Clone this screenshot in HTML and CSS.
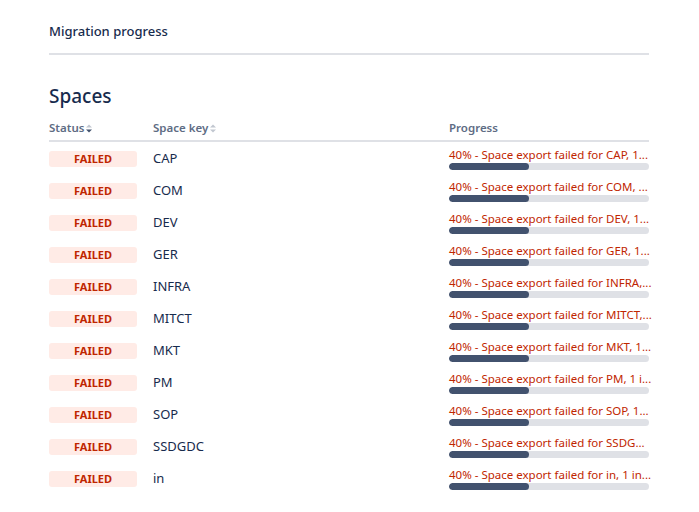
FILE: index.html
```html
<!DOCTYPE html>
<html>
<head>
<meta charset="utf-8">
<link rel="stylesheet" href="styles.css">
</head>
<body>
<div class="page">
  <div class="title">Migration progress</div>
  <h2 class="heading">Spaces</h2>
  <table class="table">
    <thead>
      <tr>
        <th class="c-status">Status<span class="sort"><svg width="6" height="9" viewBox="0 0 6 9"><path d="M0 3.5 L3 0.5 L6 3.5Z" fill="#c1c7d0"/><path d="M0 5.5 L3 8.5 L6 5.5Z" fill="#42526e"/></svg></span></th>
        <th class="c-key">Space key<span class="sort"><svg width="6" height="9" viewBox="0 0 6 9"><path d="M0 3.5 L3 0.5 L6 3.5Z" fill="#c1c7d0"/><path d="M0 5.5 L3 8.5 L6 5.5Z" fill="#c1c7d0"/></svg></span></th>
        <th class="c-gap"></th>
        <th class="c-prog">Progress</th>
      </tr>
    </thead>
    <tbody>
      <tr><td><span class="loz">FAILED</span></td><td class="key">CAP</td><td></td><td><div class="ptext">40% - Space export failed for CAP, 1...</div><div class="bar"><div class="fill" style="width:40%"></div></div></td></tr>
      <tr><td><span class="loz">FAILED</span></td><td class="key">COM</td><td></td><td><div class="ptext">40% - Space export failed for COM, ...</div><div class="bar"><div class="fill" style="width:40%"></div></div></td></tr>
      <tr><td><span class="loz">FAILED</span></td><td class="key">DEV</td><td></td><td><div class="ptext">40% - Space export failed for DEV, 1...</div><div class="bar"><div class="fill" style="width:40%"></div></div></td></tr>
      <tr><td><span class="loz">FAILED</span></td><td class="key">GER</td><td></td><td><div class="ptext">40% - Space export failed for GER, 1...</div><div class="bar"><div class="fill" style="width:40%"></div></div></td></tr>
      <tr><td><span class="loz">FAILED</span></td><td class="key">INFRA</td><td></td><td><div class="ptext">40% - Space export failed for INFRA,...</div><div class="bar"><div class="fill" style="width:40%"></div></div></td></tr>
      <tr><td><span class="loz">FAILED</span></td><td class="key">MITCT</td><td></td><td><div class="ptext">40% - Space export failed for MITCT,...</div><div class="bar"><div class="fill" style="width:40%"></div></div></td></tr>
      <tr><td><span class="loz">FAILED</span></td><td class="key">MKT</td><td></td><td><div class="ptext">40% - Space export failed for MKT, 1...</div><div class="bar"><div class="fill" style="width:40%"></div></div></td></tr>
      <tr><td><span class="loz">FAILED</span></td><td class="key">PM</td><td></td><td><div class="ptext">40% - Space export failed for PM, 1 i...</div><div class="bar"><div class="fill" style="width:40%"></div></div></td></tr>
      <tr><td><span class="loz">FAILED</span></td><td class="key">SOP</td><td></td><td><div class="ptext">40% - Space export failed for SOP, 1...</div><div class="bar"><div class="fill" style="width:40%"></div></div></td></tr>
      <tr><td><span class="loz">FAILED</span></td><td class="key">SSDGDC</td><td></td><td><div class="ptext">40% - Space export failed for SSDG...</div><div class="bar"><div class="fill" style="width:40%"></div></div></td></tr>
      <tr><td><span class="loz">FAILED</span></td><td class="key">in</td><td></td><td><div class="ptext">40% - Space export failed for in, 1 in...</div><div class="bar"><div class="fill" style="width:40%"></div></div></td></tr>
    </tbody>
  </table>
</div>
</body>
</html>
```
FILE: styles.css
```css
html, body {
  margin: 0;
  padding: 0;
  background: #ffffff;
}
body {
  font-family: "Noto Sans", "Open Sans", sans-serif;
  color: #172b4d;
}
.page {
  width: 600px;
  margin-left: 49px;
}
.title {
  padding-top: 21px;
  font-size: 13px;
  line-height: 20px;
  font-weight: 500;
  padding-bottom: 12px;
  border-bottom: 2px solid #dfe1e6;
}
.heading {
  margin: 29px 0 0 0;
  font-size: 19px;
  line-height: 24px;
  font-weight: 500;
  color: #172b4d;
}
.table {
  width: 600px;
  border-collapse: collapse;
  table-layout: fixed;
  margin-top: 12px;
}
.table th {
  text-align: left;
  font-size: 11.5px;
  font-weight: 600;
  color: #5e6c84;
  line-height: 16px;
  padding: 0 0 4px 0;
  border-bottom: 2px solid #dfe1e6;
  white-space: nowrap;
}
.c-status { width: 104px; }
.c-key { width: 160px; }
.c-gap { width: 136px; }
.c-prog { width: 200px; }
.sort {
  display: inline-block;
  margin-left: 2px;
  vertical-align: -1px;
}
.sort svg { display: block; }
.table td {
  padding: 0;
  height: 32px;
  vertical-align: middle;
}
.loz {
  display: flex;
  width: 88px;
  height: 16px;
  align-items: center;
  justify-content: center;
  background: #ffebe6;
  color: #bf2600;
  font-size: 11px;
  font-weight: 700;
  border-radius: 3px;
  margin-top: 1px;
}
.key {
  font-size: 13px;
  color: #172b4d;
}
.ptext {
  font-size: 11.5px;
  line-height: 16px;
  color: #bf2600;
  white-space: nowrap;
  width: 200px;
}
.bar {
  height: 7px;
  width: 200px;
  background: #dfe1e6;
  border-radius: 4px;
  overflow: hidden;
}
.fill {
  height: 100%;
  background: #42526e;
  border-radius: 4px;
}
```
